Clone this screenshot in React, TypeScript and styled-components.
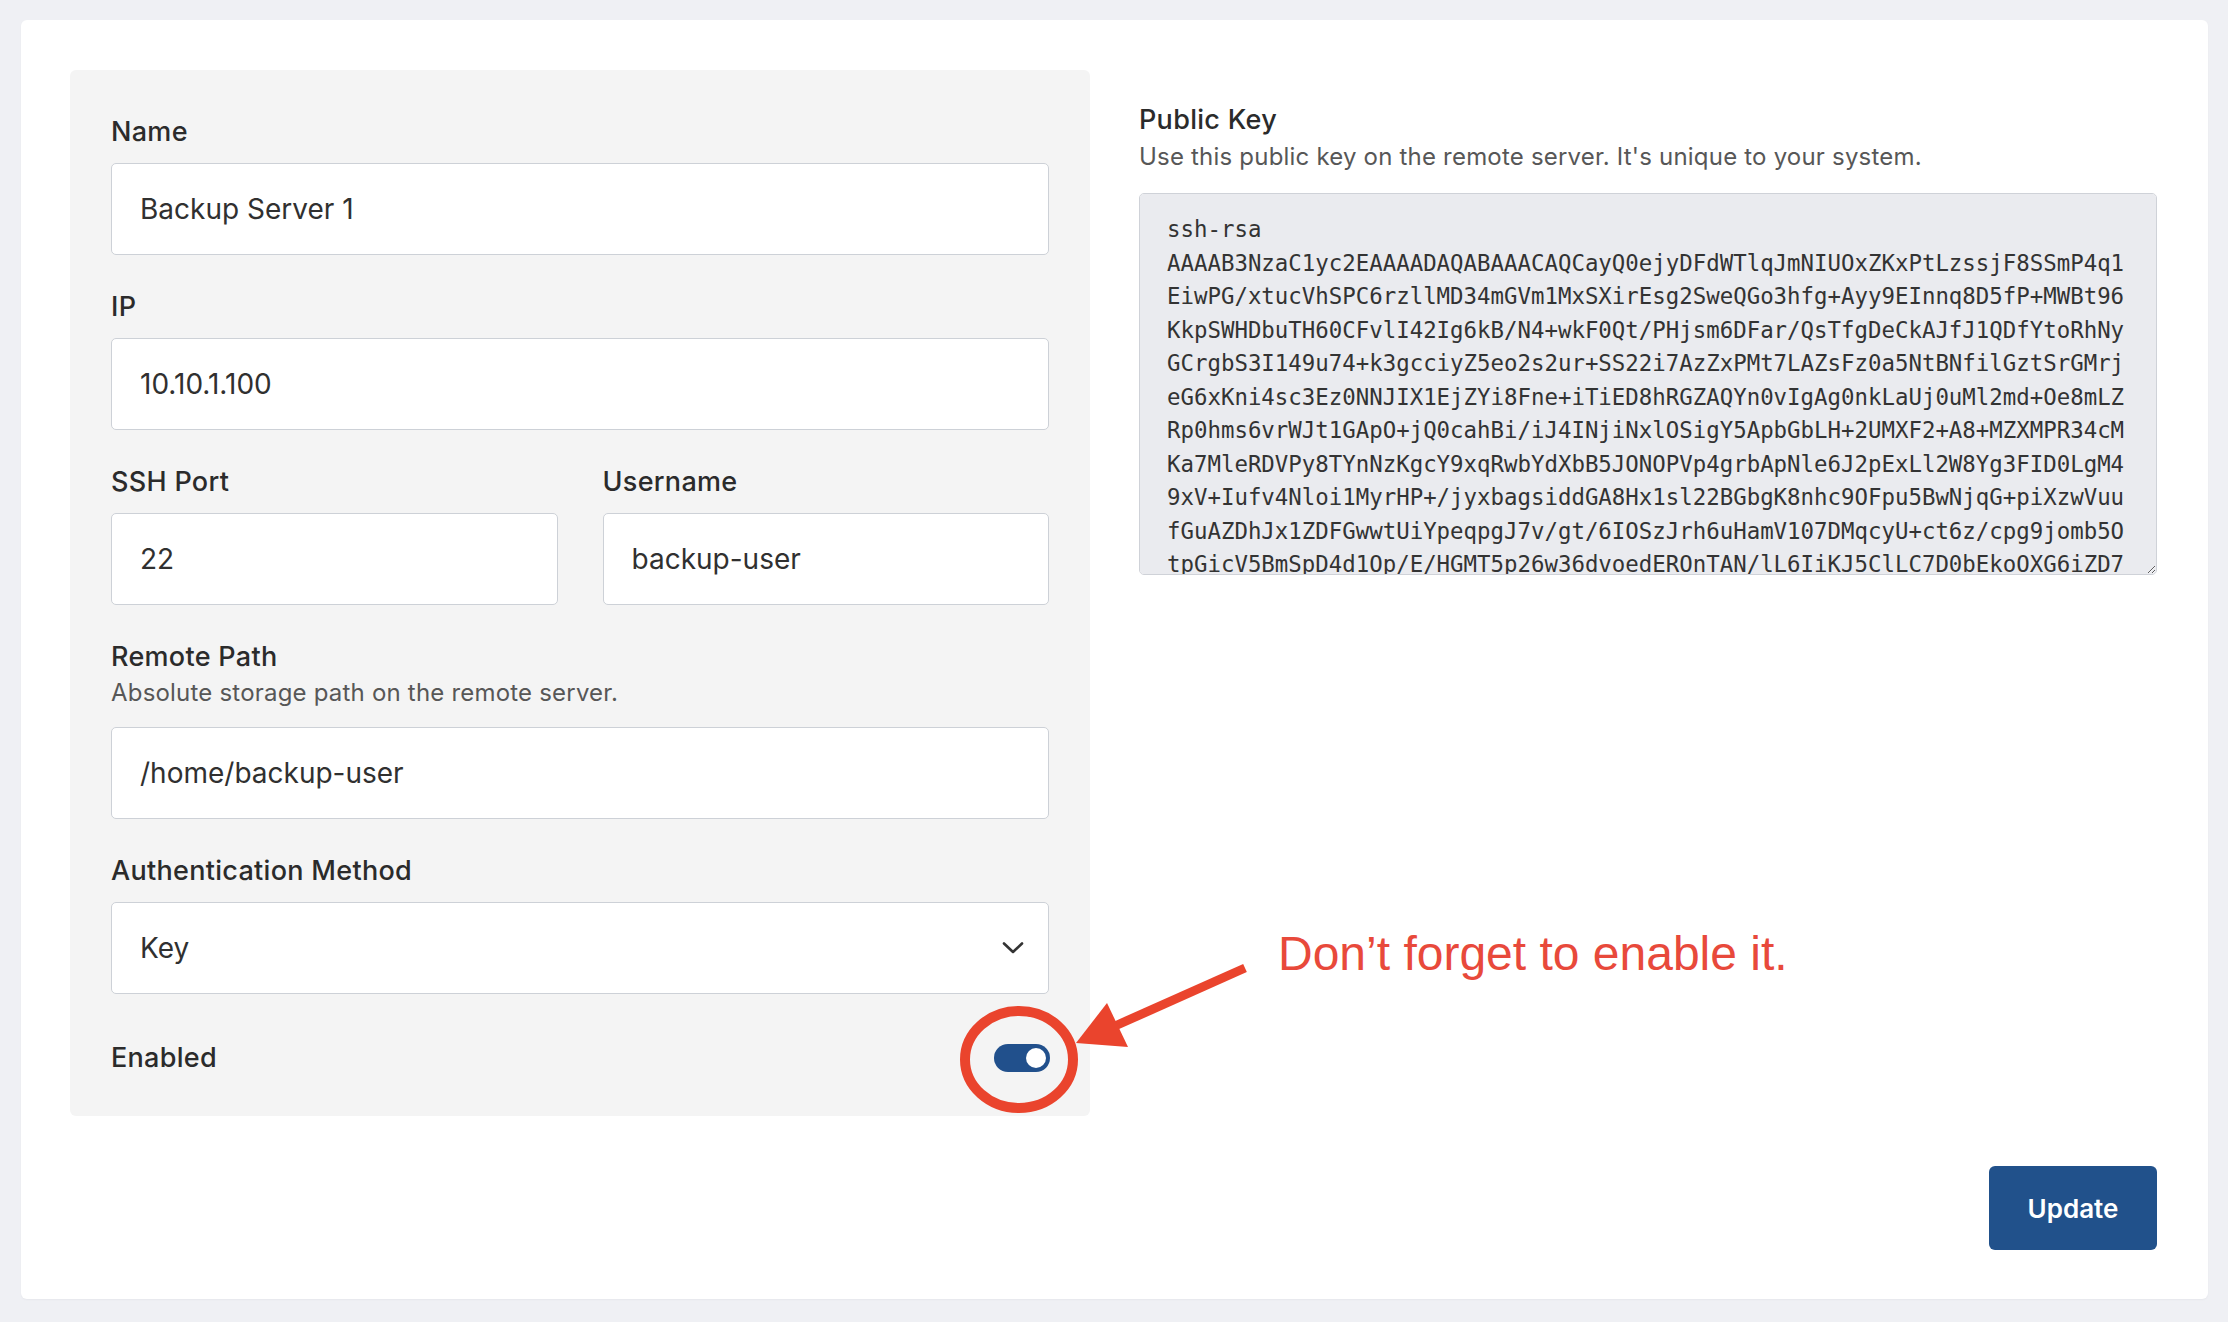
import React, { useState } from 'react';
import styled, { createGlobalStyle } from 'styled-components';

const GlobalStyle = createGlobalStyle`
    html, body {
        margin: 0;
        padding: 0;
    }
    body {
        background: #eff0f4;
        font-family: Inter, "Noto Sans", "Liberation Sans", sans-serif;
        color: #2e2e2e;
    }
    * {
        box-sizing: border-box;
    }
`;

const KEY_LINES = [
    'ssh-rsa',
    'AAAAB3NzaC1yc2EAAAADAQABAAACAQCayQ0ejyDFdWTlqJmNIUOxZKxPtLzssjF8SSmP4q1',
    'EiwPG/xtucVhSPC6rzllMD34mGVm1MxSXirEsg2SweQGo3hfg+Ayy9EInnq8D5fP+MWBt96',
    'KkpSWHDbuTH60CFvlI42Ig6kB/N4+wkF0Qt/PHjsm6DFar/QsTfgDeCkAJfJ1QDfYtoRhNy',
    'GCrgbS3I149u74+k3gcciyZ5eo2s2ur+SS22i7AzZxPMt7LAZsFz0a5NtBNfilGztSrGMrj',
    'eG6xKni4sc3Ez0NNJIX1EjZYi8Fne+iTiED8hRGZAQYn0vIgAg0nkLaUj0uMl2md+Oe8mLZ',
    'Rp0hms6vrWJt1GApO+jQ0cahBi/iJ4INjiNxlOSigY5ApbGbLH+2UMXF2+A8+MZXMPR34cM',
    'Ka7MleRDVPy8TYnNzKgcY9xqRwbYdXbB5JONOPVp4grbApNle6J2pExLl2W8Yg3FID0LgM4',
    '9xV+Iufv4Nloi1MyrHP+/jyxbagsiddGA8Hx1sl22BGbgK8nhc9OFpu5BwNjqG+piXzwVuu',
    'fGuAZDhJx1ZDFGwwtUiYpeqpgJ7v/gt/6IOSzJrh6uHamV107DMqcyU+ct6z/cpg9jomb5O',
    'tpGicV5BmSpD4d1Op/E/HGMT5p26w36dvoedEROnTAN/lL6IiKJ5ClLC7D0bEkoOXG6iZD7',
    'q3xPo8Lb2mWcT7vYd1KsR9eHn4Qa6JuF0gZiB5tMy2NcX8oVw3rEl7pDk1hSj6fGb9aUq4C',
    'Hm5zT8yWn2Lx0cQe7Rk4dVa1PsG9bJi6uN3oFt8EwYq2Mh5lAg0Xz7KrSv4Dc9Bp1eIj3w==',
    'deploy@backup-host',
];

const Page = styled.div`
    position: relative;
    padding: 20px 20px 23px 21px;
`;

const Card = styled.div`
    background: #ffffff;
    border-radius: 6px;
    padding: 50px 51px 49px 49px;
    box-shadow: 0 1px 2px rgba(20, 30, 50, 0.04);
`;

const Columns = styled.div`
    display: grid;
    grid-template-columns: 1020px 1fr;
    column-gap: 49px;
    align-items: start;
`;

const Panel = styled.div`
    background: #f4f4f4;
    border-radius: 6px;
    padding: 44px 41px 28px;
    display: flex;
    flex-direction: column;
    gap: 34px;
`;

const Field = styled.div`
    display: flex;
    flex-direction: column;
    min-width: 0;
`;

const Pair = styled.div`
    display: grid;
    grid-template-columns: 1fr 1fr;
    column-gap: 45px;
`;

const Label = styled.label<{ $tight?: boolean }>`
    display: block;
    font-size: 27px;
    line-height: 36px;
    font-weight: 500;
    letter-spacing: 0.3px;
    color: #2b2b2b;
    margin-bottom: ${(p) => (p.$tight ? '1px' : '13px')};
`;

const Title = styled.h2`
    margin: 0;
    font-size: 27px;
    line-height: 36px;
    font-weight: 500;
    letter-spacing: 0.3px;
    color: #2b2b2b;
`;

const Hint = styled.p<{ $gapTop?: number; $gapBottom?: number }>`
    margin: ${(p) => p.$gapTop ?? 0}px 0 ${(p) => p.$gapBottom ?? 17}px;
    font-size: 24px;
    line-height: 34px;
    letter-spacing: 0.2px;
    color: #575757;
`;

const TextInput = styled.input`
    width: 100%;
    height: 92px;
    padding: 0 28px;
    border: 1px solid #cdd1d7;
    border-radius: 5px;
    background: #ffffff;
    font-family: Inter, "Noto Sans", sans-serif;
    font-size: 28px;
    color: #303030;
    outline: none;
`;

const SelectWrap = styled.div`
    position: relative;
`;

const Select = styled.select`
    width: 100%;
    height: 92px;
    padding: 0 70px 0 28px;
    border: 1px solid #cdd1d7;
    border-radius: 5px;
    background: #ffffff;
    font-family: Inter, "Noto Sans", sans-serif;
    font-size: 28px;
    color: #303030;
    appearance: none;
    outline: none;
`;

const Chevron = styled.svg`
    position: absolute;
    right: 25px;
    top: 50%;
    margin-top: -6px;
    pointer-events: none;
`;

const SwitchRow = styled.div`
    height: 60px;
    display: flex;
    align-items: center;
    justify-content: space-between;
`;

const SwitchLabel = styled.span`
    font-size: 27px;
    line-height: 36px;
    font-weight: 500;
    letter-spacing: 0.3px;
    color: #2b2b2b;
`;

const Switch = styled.button<{ $on: boolean }>`
    position: relative;
    width: 56px;
    height: 28px;
    margin-right: -1px;
    padding: 0;
    border: none;
    border-radius: 14px;
    background: ${(p) => (p.$on ? '#21508c' : '#c7cbd1')};
    cursor: pointer;

    &::after {
        content: '';
        position: absolute;
        top: 4px;
        left: ${(p) => (p.$on ? '32px' : '4px')};
        width: 20px;
        height: 20px;
        border-radius: 50%;
        background: #ffffff;
    }
`;

const KeyColumn = styled.div`
    padding-top: 32px;
    display: flex;
    flex-direction: column;
`;

const KeyBox = styled.textarea`
    width: 100%;
    height: 382px;
    padding: 19px 27px;
    border: 1px solid #cfd2d8;
    border-radius: 5px;
    background: #eaebef;
    font-family: "DejaVu Sans Mono", "Liberation Mono", monospace;
    font-size: 22.4px;
    line-height: 33.5px;
    color: #333333;
    white-space: pre;
    overflow: auto;
    scrollbar-width: none;
    outline: none;

    &::-webkit-scrollbar {
        display: none;
    }
`;

const Footer = styled.div`
    display: flex;
    justify-content: flex-end;
    margin-top: 50px;
`;

const PrimaryButton = styled.button`
    width: 168px;
    height: 84px;
    border: none;
    border-radius: 6px;
    background: #21518b;
    color: #ffffff;
    font-family: Inter, "Noto Sans", sans-serif;
    font-size: 26px;
    font-weight: 600;
    cursor: pointer;
`;

const Callout = styled.svg`
    position: absolute;
    left: 950px;
    top: 950px;
    pointer-events: none;
`;

const CalloutText = styled.div`
    position: absolute;
    left: 1278px;
    top: 930px;
    font-family: "Liberation Sans", Arial, sans-serif;
    font-size: 48px;
    line-height: 48px;
    color: #e8493b;
    white-space: nowrap;
    pointer-events: none;
`;

const App: React.FC = () => {
    const [name, setName] = useState('Backup Server 1');
    const [ip, setIp] = useState('10.10.1.100');
    const [port, setPort] = useState('22');
    const [user, setUser] = useState('backup-user');
    const [path, setPath] = useState('/home/backup-user');
    const [auth, setAuth] = useState('key');
    const [enabled, setEnabled] = useState(true);

    return (
        <Page>
            <GlobalStyle />
            <Card>
                <Columns>
                    <Panel>
                        <Field>
                            <Label>Name</Label>
                            <TextInput value={name} onChange={(e) => setName(e.target.value)} />
                        </Field>
                        <Field>
                            <Label>IP</Label>
                            <TextInput value={ip} onChange={(e) => setIp(e.target.value)} />
                        </Field>
                        <Pair>
                            <Field>
                                <Label>SSH Port</Label>
                                <TextInput value={port} onChange={(e) => setPort(e.target.value)} />
                            </Field>
                            <Field>
                                <Label>Username</Label>
                                <TextInput value={user} onChange={(e) => setUser(e.target.value)} />
                            </Field>
                        </Pair>
                        <Field>
                            <Label $tight>Remote Path</Label>
                            <Hint>Absolute storage path on the remote server.</Hint>
                            <TextInput value={path} onChange={(e) => setPath(e.target.value)} />
                        </Field>
                        <Field>
                            <Label>Authentication Method</Label>
                            <SelectWrap>
                                <Select value={auth} onChange={(e) => setAuth(e.target.value)}>
                                    <option value="key">Key</option>
                                    <option value="password">Password</option>
                                </Select>
                                <Chevron width="22" height="12" viewBox="0 0 22 12">
                                    <path
                                        d="M2 1.5 L11 10 L20 1.5"
                                        fill="none"
                                        stroke="#333"
                                        strokeWidth="2.6"
                                        strokeLinecap="round"
                                        strokeLinejoin="round"
                                    />
                                </Chevron>
                            </SelectWrap>
                        </Field>
                        <SwitchRow>
                            <SwitchLabel>Enabled</SwitchLabel>
                            <Switch
                                role="switch"
                                aria-checked={enabled}
                                $on={enabled}
                                onClick={() => setEnabled(!enabled)}
                            />
                        </SwitchRow>
                    </Panel>
                    <KeyColumn>
                        <Title>Public Key</Title>
                        <Hint $gapTop={2} $gapBottom={19}>
                            Use this public key on the remote server. It's unique to your system.
                        </Hint>
                        <KeyBox readOnly spellCheck={false} value={KEY_LINES.join('\n')} />
                    </KeyColumn>
                </Columns>
                <Footer>
                    <PrimaryButton>Update</PrimaryButton>
                </Footer>
            </Card>

            {/* annotation drawn over the screenshot */}
            <Callout width="320" height="180" viewBox="0 0 320 180">
                <ellipse cx="69" cy="109.5" rx="54" ry="48.5" fill="none" stroke="#ea442d" strokeWidth="10" />
                <line x1="295" y1="18" x2="165" y2="76" stroke="#ea442d" strokeWidth="9" />
                <polygon points="126,93 157,53 178,97" fill="#ea442d" />
            </Callout>
            <CalloutText>Don’t forget to enable it.</CalloutText>
        </Page>
    );
};

export default App;
